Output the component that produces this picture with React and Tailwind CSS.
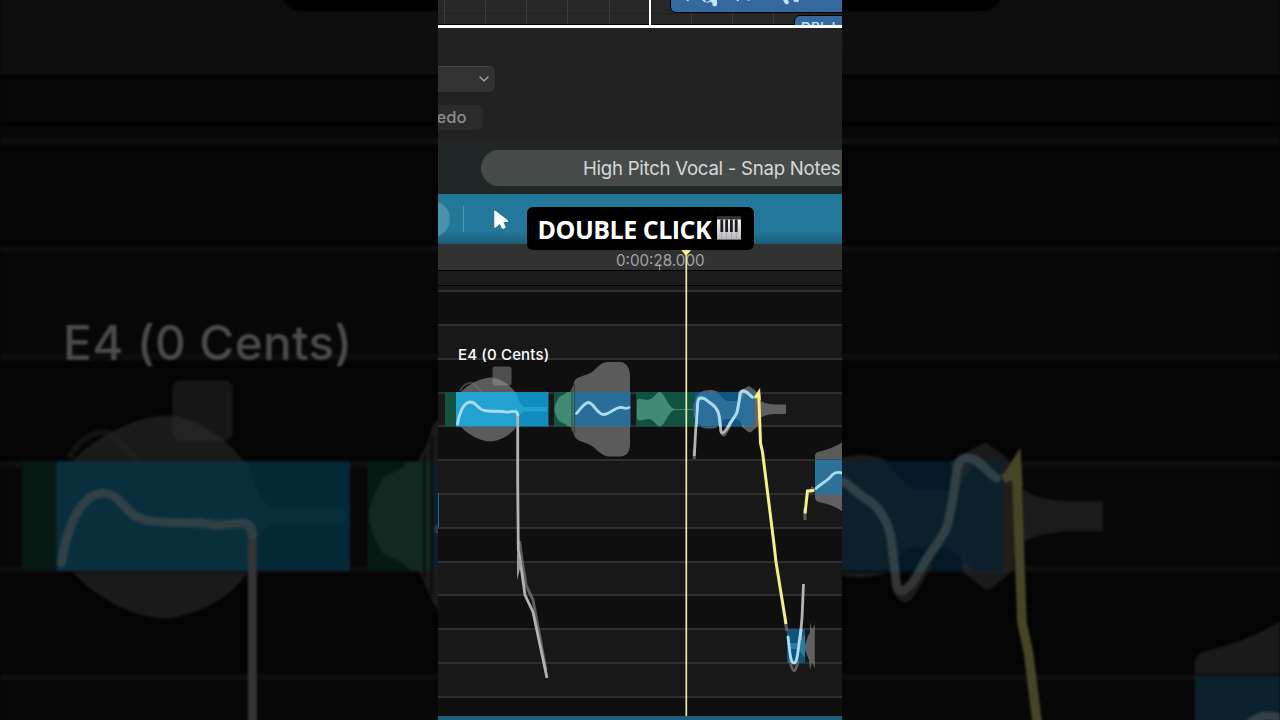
import clsx from 'clsx';
import {ChevronDown} from 'lucide-react';

// Alternating piano-roll lanes, top to bottom
const LANES = ['dark', 'light', 'dark', 'light', 'dark', 'light', 'light', 'dark', 'light', 'dark', 'light', 'light', 'dark'];

const GRID = [6, 47, 88, 129, 171, 253, 294, 335, 376];

const PianoKeys = () => (
    <svg viewBox="0 0 24 24" className="h-6 w-6">
        <defs>
            <linearGradient id="keys" x1="0" y1="0" x2="0" y2="1">
                <stop offset="0" stopColor="#f4f4f4"/>
                <stop offset="1" stopColor="#b9b9bd"/>
            </linearGradient>
        </defs>
        <rect x="0" y="0" width="24" height="3.4" fill="#2c2c2e"/>
        <rect x="0" y="1" width="24" height="0.8" fill="#3c3c40"/>
        <rect x="0" y="3.4" width="24" height="20.2" fill="url(#keys)"/>
        {[4.8, 9.6, 14.4, 19.2].map((x) => (
            <g key={x}>
                <rect x={x - 0.3} y="3.4" width="0.6" height="20.2" fill="#8d8d90"/>
                <rect x={x - 1.4} y="3.4" width="2.8" height="12.6" rx="0.5" fill="#1b1b1d"/>
            </g>
        ))}
    </svg>
);

const Arranger = () => (
    <div className="relative h-7 shrink-0 overflow-hidden border-b-[3px] border-white bg-[#272727]">
        <div className="absolute inset-x-0 top-[13px] h-px bg-[#202020]"/>
        {GRID.map((x) => (
            <div key={x} className="absolute inset-y-0 w-px bg-[#3c3c3c]" style={{left: x}}/>
        ))}
        <div className="absolute inset-x-0 bottom-0 h-px bg-black"/>
        <div className="absolute inset-y-0 left-[211px] w-[1.500px] bg-white"/>
        <div className="absolute top-[-10px] left-[232px] h-[23px] w-48 rounded-md border border-black bg-[#35689f]">
            <svg viewBox="671 0 171 12" className="mt-[9px] h-3 w-[171px]" fill="#c3e4fb">
                <path d="M686 0h3l-1 1.500zM702 0h3l2 3 1.500-2 2-1h6.500v5l-2 1.500-2.500-1v-2l-2-2-2 1-2-1-1.500 1zM736 0h3l-1 1.500zM747 0h3l-1 1zM783 0h5l1 3-2 1.500-2-1zM793 0h6l-1 2.500-2-1-1 1z"/>
            </svg>
        </div>
        <div className="absolute top-[15px] left-[356px] h-6 w-20 rounded-md border border-black bg-[#35689f] pl-1.5 text-[14px] leading-[23px] font-medium text-[#c3e4fb]">
            DBl .l
        </div>
    </div>
);

const Controls = () => (
    <div className="flex h-28 shrink-0 flex-col items-start gap-[13px] bg-[#222222] pt-[38px]">
        <div className="flex h-[26px] w-[57px] items-center justify-end rounded-r-md border-t border-[#444444] bg-[#323232] pr-[3px] pb-px shadow-sm">
            <ChevronDown className="h-4 w-4 text-[#9b9b9b]" strokeWidth={2.3}/>
        </div>
        <div className="flex h-[25px] w-[45px] items-center rounded-r-md bg-[#2b2b2b] text-[16.5px] font-medium text-[#8f8f8f]">
            <span className="-ml-[1.5px]">edo</span>
        </div>
    </div>
);

const TitleBar = () => (
    <div className="flex h-[54px] shrink-0 items-start bg-linear-to-b from-[#222424] to-[#1f2827] to-30% pt-2.5">
        <div className="ml-[43px] flex h-9 w-[400px] shrink-0 items-center rounded-full bg-[#464b4a] pt-px pl-[102px] text-[18.6px] tracking-[-0.25px] whitespace-nowrap text-[#d6d9d8]">
            High Pitch Vocal - Snap Notes
        </div>
    </div>
);

const Toolbar = () => (
    <div className="flex h-[50px] shrink-0 items-center bg-linear-to-b from-[#237798] from-75% to-[#1b5d77]">
        <div className="-ml-6 h-9 w-9 rounded-full bg-[#4793ac]"/>
        <div className="ml-[13px] h-[26px] w-px bg-[#4f9ab3]"/>
        <svg viewBox="0 0 15 19" className="ml-[30px] h-[19px] w-[15px]" fill="white">
            <path d="M0.3 1.2Q0.3 0 1.4 0.7L14 10.6Q14.8 11.4 13.7 11.8L9.4 12.3L11.6 17Q11.7 17.6 11.2 17.9L8.9 18.8Q8.3 19 8 18.4L5.8 14L1.6 17.5Q0.4 18.2 0.3 17Z"/>
        </svg>
    </div>
);

const SLIDE = 'M694.3 456L695.7 430L697.600 404C698 398.500 699 398 701.700 398C706 398 707 401.500 711.700 404C716 407 718.500 411 719.300 417L720.700 429Q721 434 723.500 432.500C725.500 431 726 430.500 728.300 426.500C731 421 735 417 736.700 413C738.500 407 739 401 740 395C740.500 391.500 741.500 391 743.500 391C747 391 749 395 752.500 397.300';

const Notes = () => (
    <svg viewBox="438 244 404 472" className="absolute inset-0 h-full w-full" fill="none">
        <defs>
            <clipPath id="in-note">
                <rect x="696" y="386" width="60" height="41"/>
            </clipPath>
        </defs>

        {/* note blocks */}
        <rect x="445" y="392" width="12" height="34.5" fill="#16533f"/>
        <rect x="456" y="392" width="92.500" height="34.500" fill="#128bbd"/>
        <rect x="554" y="392" width="21" height="34.500" fill="#16533f"/>
        <rect x="636" y="392" width="59" height="34.500" fill="#115141"/>
        <rect x="695" y="392" width="61" height="34.500" fill="#115483"/>
        <rect x="787" y="629" width="18" height="34" fill="#0f5479"/>
        <rect x="438" y="493" width="1" height="34" fill="#1d6f9a"/>

        {/* amplitude shapes */}
        <g fill="#9b9b9b" fillOpacity="0.55">
            <path d="M461 392C468 384 482 377.500 491 377.500C500 378 510 385 515 392ZM461 427C469 435 480 441.500 491 441.500C502 440 512 434 516 427Z"/>
            <path d="M570 392L573 386L574.500 381C577 376 586 376 592 372C597 368 601 362 608 362H621C627 363 630 369 630 376V444C630 451 627 456 621 456.500H608C600 455 597 449 592 446C586 442 577 442 574.500 436L570 426Z"/>
            <path d="M701 392C705 389.500 714 389 718 392ZM701 427C705 429 714 429 718 427ZM738 392L747 387L749 386L756 391L757 427L751 432L749 432.500L742 427Z"/>
            <path d="M756 392L760 400Q764 404 774 404.500H786V414H774Q764 415 760 418L756 427Z"/>
            <path d="M815 459V455Q816 452 820 451.500Q833 448 842 442.500V459ZM815 494V498Q816 502 821 502.500Q833 505 842 511V494Z"/>
            <path d="M805 645L808 636Q809 634 810 633V622L812 630L814.800 624V668L812 662L810 670L809 660L805 650Z"/>
            <rect x="492.500" y="366.500" width="19" height="19" rx="2.500" fillOpacity="0.45"/>
        </g>
        <path d="M460 391C464 383 472 380 476 386L482 392" stroke="#777777" strokeOpacity="0.45" strokeWidth="2"/>

        {/* amplitude tint inside the blocks */}
        <path d="M456 392H516Q519 404 524 407H547V411.500H524Q519 413 516 426.500H456Z" fill="#23a1d0"/>
        <path d="M554.500 409C555 403 557 402 559 397L565 394L567 392H575V426.500H568L565 424L559 421C557 417 555 415 554.500 409Z" fill="#418a74"/>
        <path d="M574.500 392H630.500V426.500H574.500Z" fill="#296e98"/>
        <path d="M572 390V429M574.300 384V434" stroke="#161616" strokeOpacity="0.7" strokeWidth="0.800"/>
        <path d="M637 402Q637 398 640 399L648 400C654 399 656 392 660 392C665 393 668 408 675 409H693V410H675C668 411 665 426 660 426.500C656 426 654 419 648 419L640 420.500Q637 421 637 417Z" fill="#418a74"/>
        <path d="M693.500 404L697 395L701 392H716C720 393 723 401 729 401H738C743 400 743 392 748 392H755V426.500H745C743 424 739 419 735 419H726C722 420 720 426 716 426.500H702L697 423L693.500 416Z" fill="#2a6e99"/>
        <rect x="754.500" y="392" width="3.500" height="34.500" fill="#77615a"/>
        <path d="M815 459.500H842V494.500H815Z" fill="#2c7197"/>
        <path d="M788 643H798L805 634V658L798 649H788Z" fill="#267ba1"/>

        {/* original pitch */}
        <g stroke="#6b6b6b" strokeOpacity="0.85" strokeWidth="3">
            <path d="M519.500 541L522 560L526 585L533 600L546 670"/>
            <path d="M720.500 430Q722.500 437 725 434L731 424"/>
            <path d="M694.200 450V459M805 508V520M785 620L787 631M813 487L810 493"/>
            <path d="M790 660Q794 681 798 661"/>
        </g>

        {/* corrected pitch */}
        <g stroke="#b3b3b3" strokeWidth="2.800" strokeLinejoin="round">
            <path d="M516 412Q517.700 413 517.700 417V480L518.300 550L521 566L525 595L533 612L547 678"/>
            <path d="M517 552V580L521.500 563Z" fill="#9d9d9d" stroke="none"/>
            <path d={SLIDE}/>
            <path d="M800 640L802 618L803.500 584"/>
        </g>
        <g stroke="#a9dcf2" strokeWidth="2.800" strokeLinejoin="round" strokeLinecap="round">
            <path d="M457.500 424C459 414 463 403 470 402C477 402 477 409 484 410.500C492 412 499 410.500 506 412C511 412.500 517.500 409 517.800 415"/>
            <path d="M576.500 413.500C580 410 584 402.500 588.500 402.500C594 403 597 414.500 603.500 414.500C610 414.500 615 406.500 622 407.500C625 408.500 627 409 629 407.500"/>
            <path d={SLIDE} clipPath="url(#in-note)"/>
            <path d="M816 488.500C820 484 828 481 832 475Q836 471 842 473"/>
            <path d="M788 637C790 652 790 663 794 663C798 663 798 646 801 630"/>
        </g>
        <g stroke="#f2f088" strokeWidth="3">
            <path d="M754.500 397.500L758.800 395.500L760.500 443L762.500 452L766 480L773.500 540L776 562L786 624"/>
            <path d="M755 396L759.800 388.500L760.500 400" fill="#f2f088" strokeWidth="0.500"/>
            <path d="M805 513.500L807.500 491L814.500 490.500"/>
        </g>

        {/* playhead */}
        <path d="M681 249.500H691.500L686.500 255.500H685.500Z" fill="#f3f08a"/>
        <path d="M686.300 255V716" stroke="#efe9a8" strokeWidth="1.700"/>
    </svg>
);

const Timeline = () => (
    <div className="relative flex h-[472px] shrink-0 flex-col">
        <div className="h-[27px] shrink-0 border-b border-black bg-[#313131]">
            <div className="flex h-full items-end pl-[221px]">
                <div className="h-1.5 w-px bg-[#9a9a9a]"/>
            </div>
        </div>
        <div className="h-[15px] shrink-0 border-b border-black bg-[#1b1b1b]"/>
        <div className="h-[4.300px] shrink-0 bg-[#191919]"/>
        <div className="flex min-h-0 flex-1 flex-col overflow-hidden">
            {LANES.map((lane, i) => (
                <div
                    key={i}
                    className={clsx(
                        'h-[33.8px] shrink-0 border-t-2 border-[#2f2f2f]',
                        lane === 'dark' ? 'bg-[#0f0f0f]' : 'bg-[#181818]'
                    )}
                />
            ))}
        </div>
        <span className="absolute top-[7px] left-[178px] text-[15.2px] leading-5 text-[#a3a3a3]">0:00:28.000</span>
        <Notes/>
        <span className="absolute top-[101.300px] left-[20px] text-[15px] leading-5 font-medium tracking-[0.15px] whitespace-nowrap text-white">E4 (0 Cents)</span>
    </div>
);

const PitchEditor = () => (
    <div className="relative flex h-[720px] w-[404px] flex-col overflow-hidden bg-[#222222] font-['Inter',sans-serif]">
        <Arranger/>
        <Controls/>
        <TitleBar/>
        <Toolbar/>
        <Timeline/>
        <div className="h-1 shrink-0 bg-[#1d5f7c]"/>
        {/* caption */}
        <div className="absolute top-[207px] left-[89px] flex h-[42.500px] w-[227px] items-center gap-1.5 rounded-md bg-black pl-[10.5px] font-['Open_Sans',sans-serif] text-[25px] font-bold whitespace-nowrap text-white">
            <span className="mt-0.5 tracking-[-0.5px]">DOUBLE CLICK</span>
            <PianoKeys/>
        </div>
    </div>
);

export default function App() {
    return (
        <main className="relative flex h-[720px] w-[1280px] justify-center overflow-hidden bg-black">
            {/* dimmed, enlarged copy behind the portrait frame */}
            <div className="absolute inset-0 flex justify-center opacity-29 blur-[1px]" aria-hidden="true">
                <div className="scale-[3.17]">
                    <PitchEditor/>
                </div>
            </div>
            <PitchEditor/>
        </main>
    );
}
